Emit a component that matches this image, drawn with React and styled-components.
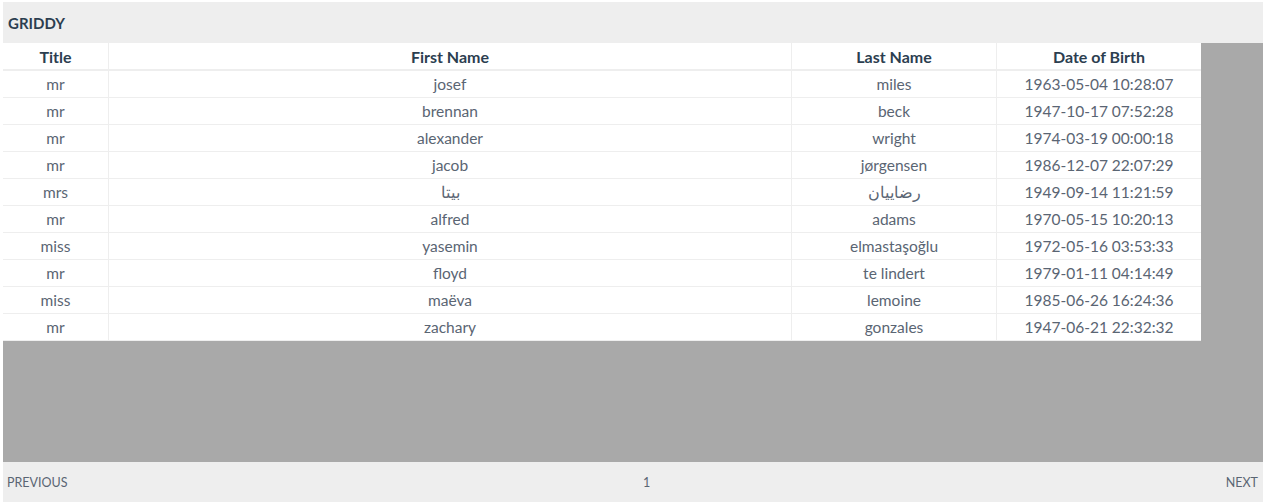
import styled, { createGlobalStyle } from "styled-components"

const Global = createGlobalStyle`
    html, body {
        margin: 0;
        padding: 0;
        background: #fff;
    }
    body {
        font-family: Lato, "Noto Sans", sans-serif;
    }
`

const Frame = styled.div`
    padding: 2px 3px 2px 3px;
    height: 504px;
    box-sizing: border-box;
`
const Grid = styled.div`
    display: flex;
    flex-direction: column;
    height: 100%;
`
const Header = styled.div`
    height: 41px;
    background-color: #eeeeee;
    display: flex;
    align-items: center;
    padding: 0 5px;
    font-size: 15px;
    font-weight: 700;
    color: #2c3e50;
`
const Body = styled.div`
    flex: 1;
    background-color: #a9a9a9;
    overflow: hidden;
`
const Table = styled.table`
    border-collapse: collapse;
    background-color: #fff;
    table-layout: fixed;
    width: 1198px;
`
const Th = styled.th`
    width: ${(p) => p.w}px;
    height: 26px;
    padding: 0;
    font-size: 16px;
    font-weight: 700;
    color: #2c3e50;
    text-align: center;
    border-right: 1px solid #eeeeee;
    border-bottom: 2px solid #eeeeee;
    &:last-child { border-right: none; }
`
const Td = styled.td`
    height: 26px;
    padding: 0;
    font-size: 15.5px;
    color: #5a6573;
    text-align: center;
    border-right: 1px solid #eeeeee;
    border-bottom: 1px solid #eeeeee;
    &:last-child { border-right: none; }
`
const Footer = styled.div`
    height: 40px;
    background-color: #eeeeee;
    display: flex;
    align-items: center;
    justify-content: space-between;
    padding: 0 5px 0 4px;
    font-size: 12.5px;
    color: #5a6573;
`
const PageLink = styled.span`
    cursor: pointer;
`

const colunas = [
    { nome: "Title", w: 105 },
    { nome: "First Name", w: 682 },
    { nome: "Last Name", w: 204 },
    { nome: "Date of Birth", w: 204 },
]

const pessoas = [
    ["mr", "josef", "miles", "1963-05-04 10:28:07"],
    ["mr", "brennan", "beck", "1947-10-17 07:52:28"],
    ["mr", "alexander", "wright", "1974-03-19 00:00:18"],
    ["mr", "jacob", "jørgensen", "1986-12-07 22:07:29"],
    ["mrs", "بیتا", "رضاییان", "1949-09-14 11:21:59"],
    ["mr", "alfred", "adams", "1970-05-15 10:20:13"],
    ["miss", "yasemin", "elmastaşoğlu", "1972-05-16 03:53:33"],
    ["mr", "floyd", "te lindert", "1979-01-11 04:14:49"],
    ["miss", "maëva", "lemoine", "1985-06-26 16:24:36"],
    ["mr", "zachary", "gonzales", "1947-06-21 22:32:32"],
]

const App = () => {
    return (
        <>
            <Global />
            <Frame>
                <Grid>
                    <Header>GRIDDY</Header>
                    <Body>
                        <Table>
                            <thead>
                                <tr>
                                    {colunas.map((c) => <Th key={c.nome} w={c.w}>{c.nome}</Th>)}
                                </tr>
                            </thead>
                            <tbody>
                                {pessoas.map((p, i) => (
                                    <tr key={i}>
                                        {p.map((v, j) => <Td key={j}>{v}</Td>)}
                                    </tr>
                                ))}
                            </tbody>
                        </Table>
                    </Body>
                    <Footer>
                        <PageLink>PREVIOUS</PageLink>
                        <PageLink>1</PageLink>
                        <PageLink>NEXT</PageLink>
                    </Footer>
                </Grid>
            </Frame>
        </>
    )
}

export default App
